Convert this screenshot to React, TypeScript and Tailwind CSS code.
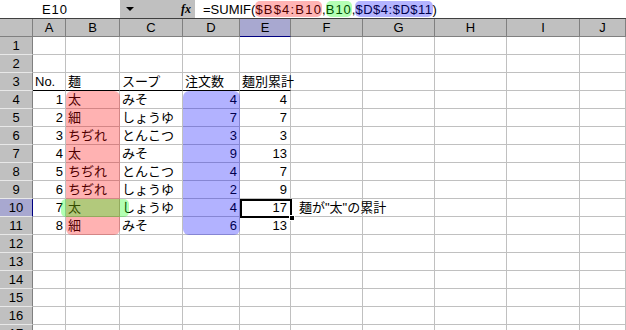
import React from 'react';

const cols = ['A', 'B', 'C', 'D', 'E', 'F', 'G', 'H', 'I', 'J'];

type Row = { a?: string; b?: string; c?: string; d?: string; e?: string; f?: string };

const data: Record<number, Row> = {
    3: { a: 'No.', b: '麺', c: 'スープ', d: '注文数', e: '麺別累計' },
    4: { a: '1', b: '太', c: 'みそ', d: '4', e: '4' },
    5: { a: '2', b: '細', c: 'しょうゆ', d: '7', e: '7' },
    6: { a: '3', b: 'ちぢれ', c: 'とんこつ', d: '3', e: '3' },
    7: { a: '4', b: '太', c: 'みそ', d: '9', e: '13' },
    8: { a: '5', b: 'ちぢれ', c: 'とんこつ', d: '4', e: '7' },
    9: { a: '6', b: 'ちぢれ', c: 'しょうゆ', d: '2', e: '9' },
    10: { a: '7', b: '太', c: 'しょうゆ', d: '4', e: '17', f: '麺が"太"の累計' },
    11: { a: '8', b: '細', c: 'みそ', d: '6', e: '13' },
};

const rows = Array.from({ length: 17 }, (_, i) => i + 1);

const App = () => {
    return (
        <div className="w-[626px] h-[330px] overflow-hidden bg-white text-black text-[13px] leading-none font-['Liberation_Sans','Noto_Sans_CJK_JP',sans-serif]">
            {/* formula bar */}
            <div className="flex h-[19px] border-b border-[#404040] bg-[#c0c0c0]">
                <div className="w-[120px] bg-white flex items-center justify-center pr-[10px] tracking-[1px]">E10</div>
                <div className="w-[75px] flex items-center justify-between pl-[6px] pr-[4px]">
                    <span className="w-0 h-0 border-l-[4px] border-r-[4px] border-t-[4px] border-l-transparent border-r-transparent border-t-black" />
                    <span className="italic font-bold text-[12px] font-['Liberation_Serif',serif]">fx</span>
                </div>
                <div className="flex-1 bg-white flex items-center pl-[8px] whitespace-nowrap">
                    <span>=SUMIF(</span>
                    <span className="bg-[#ffb4b4] text-[#4d0000] rounded-[5px] h-[16px] flex items-center tracking-[1.2px]">$B$4:B10</span>
                    <span>,</span>
                    <span className="bg-[#b4ffb4] text-[#004d00] rounded-[5px] h-[16px] flex items-center tracking-[1px]">B10</span>
                    <span>,</span>
                    <span className="bg-[#b4b4ff] text-[#00004d] rounded-[5px] h-[16px] flex items-center tracking-[0.5px]">$D$4:$D$11</span>
                    <span>)</span>
                </div>
            </div>

            {/* sheet */}
            <div className="relative grid grid-cols-[33px_33px_54px_63px_57px_51px_72px_72px_72px_73px_1fr] auto-rows-[18px]">
                <div className="bg-[#c0c0c0] border-r border-b border-[#808080]" />
                {cols.map((c) => (
                    <div
                        key={c}
                        className={
                            c === 'E'
                                ? 'bg-[#a8a8d0] border-r border-b border-r-[#808080] border-b-[#000080] flex items-center justify-center'
                                : 'bg-[#c0c0c0] border-r border-b border-[#808080] flex items-center justify-center'
                        }
                    >
                        {c}
                    </div>
                ))}

                {rows.map((r) => {
                    const d = data[r] || {};
                    const line = r === 3 ? 'border-b-black' : 'border-b-[#c0c0c0]';
                    const cell = `border-r border-b border-r-[#c0c0c0] ${line} flex items-center whitespace-nowrap`;
                    const plain = 'border-r border-b border-[#c0c0c0]';
                    return (
                        <React.Fragment key={r}>
                            <div
                                className={
                                    r === 10
                                        ? 'bg-[#a8a8d0] border-r border-b border-r-[#000080] border-b-[#e8e8e8] flex items-center justify-center'
                                        : 'bg-[#c0c0c0] border-r border-b border-r-[#808080] border-b-[#e8e8e8] flex items-center justify-center'
                                }
                            >
                                {r}
                            </div>
                            <div className={`${cell} ${r === 3 ? 'justify-start pl-[2px]' : 'justify-end pr-[2px]'}`}>{d.a}</div>
                            <div className={`${cell} pl-[2px]`}>{d.b}</div>
                            <div className={`${cell} pl-[2px]`}>{d.c}</div>
                            <div className={`${cell} ${r === 3 ? 'justify-start pl-[2px]' : 'justify-end pr-[2px]'}`}>{d.d}</div>
                            <div className={`${cell} ${r === 3 ? 'justify-start pl-[2px]' : 'justify-end pr-[3px]'}`}>{d.e}</div>
                            <div className={`${plain} flex items-center whitespace-nowrap pl-[8px]`}>{d.f}</div>
                            <div className={plain} />
                            <div className={plain} />
                            <div className={plain} />
                            <div className={plain} />
                        </React.Fragment>
                    );
                })}

                {/* range highlights */}
                <div className="absolute left-[66px] top-[72px] w-[54px] h-[144px] rounded-[6px] bg-[rgba(255,0,0,0.3)] pointer-events-none" />
                <div className="absolute left-[183px] top-[72px] w-[57px] h-[144px] rounded-[6px] bg-[rgba(0,0,255,0.3)] pointer-events-none" />
                <div className="absolute left-[61px] top-[180px] w-[68px] h-[18px] rounded-[5px] bg-[rgba(0,255,0,0.3)] pointer-events-none" />

                {/* active cell */}
                <div className="absolute left-[240px] top-[180px] w-[52px] h-[19px] border-2 border-black pointer-events-none" />
                <div className="absolute left-[289px] top-[196px] w-[6px] h-[6px] bg-black border border-white pointer-events-none" />
            </div>
        </div>
    );
};

export default App;
